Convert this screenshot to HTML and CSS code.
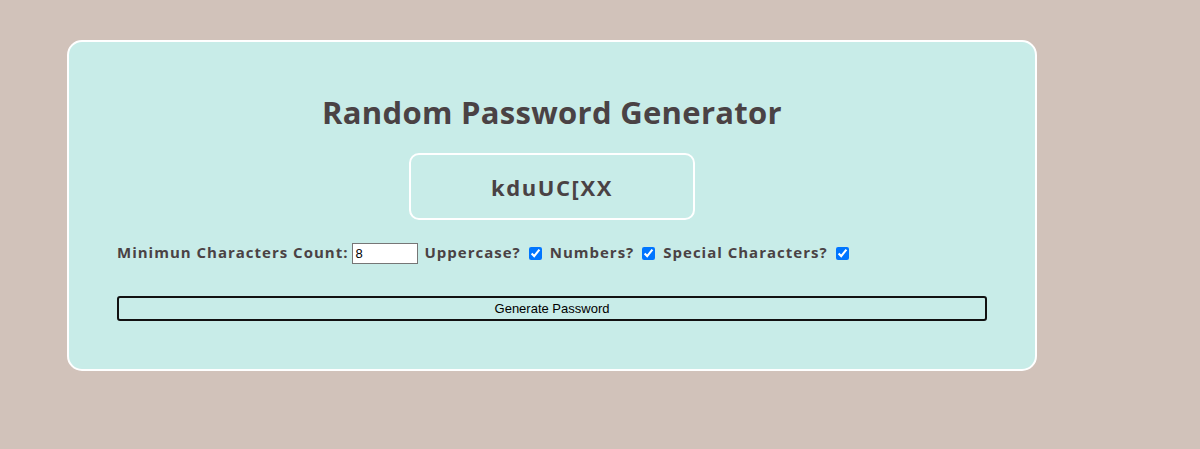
FILE: index.html
```html
<!DOCTYPE html>
<html>
<head>
<meta charset="utf-8">
<link rel="stylesheet" href="styles.css">
</head>
<body>
<div class="card">
  <h1 class="title">Random Password Generator</h1>
  <div class="output-wrap"><div class="output">kduUC[XX</div></div>
  <div class="options">
    <label class="opt"><span>Minimun Characters Count:</span><input class="count" type="text" value="8"></label>
    <label class="opt"><span>Uppercase?</span><input type="checkbox" checked></label>
    <label class="opt"><span>Numbers?</span><input type="checkbox" checked></label>
    <label class="opt"><span>Special Characters?</span><input type="checkbox" checked></label>
  </div>
  <button class="gen">Generate Password</button>
</div>
</body>
</html>
```
FILE: styles.css
```css
html, body { margin: 0; padding: 0; }
body {
  background: #d1c2ba;
  height: 449px;
  font-family: "Open Sans", "Noto Sans", sans-serif;
  color: #4a4244;
}
.card {
  box-sizing: border-box;
  margin: 40px 0 0 67px;
  width: 970px;
  height: 331px;
  background: #c8ece8;
  border: 2px solid #ffffff;
  border-radius: 15px;
  padding: 48px 48px 0 48px;
}
.title {
  margin: 0;
  text-align: center;
  font-size: 31px;
  font-weight: 700;
  line-height: 44px;
  letter-spacing: 0.3px;
}
.output-wrap { display: flex; justify-content: center; margin-top: 19px; }
.output {
  box-sizing: border-box;
  width: 286px;
  height: 67px;
  border: 2px solid #ffffff;
  border-radius: 10px;
  display: flex;
  align-items: center;
  justify-content: center;
  font-size: 22px;
  font-weight: 700;
  letter-spacing: 1.6px;
  padding-top: 1px;
}
.options {
  margin-top: 23px;
  display: flex;
  align-items: center;
  font-size: 15px;
  font-weight: 700;
  letter-spacing: 1px;
  white-space: nowrap;
}
.opt { display: flex; align-items: center; margin-right: 8px; }
.opt span { position: relative; top: -2px; }
.opt input[type=checkbox] { margin: 0 0 0 8px; width: 13px; height: 13px; }
.count {
  width: 66px;
  height: 21px;
  box-sizing: border-box;
  margin: 0 -2px 0 4px;
  padding: 1px 2px;
  font-family: "Liberation Sans", sans-serif;
  font-size: 13px;
  border: 1px solid #767676;
  letter-spacing: 0;
}
.gen {
  display: block;
  margin-top: 32px;
  width: 100%;
  height: 25px;
  background: transparent;
  border: 2px solid #111111;
  border-radius: 3px;
  font-family: "Liberation Sans", Arial, sans-serif;
  font-size: 13px;
  color: #000;
}
```
